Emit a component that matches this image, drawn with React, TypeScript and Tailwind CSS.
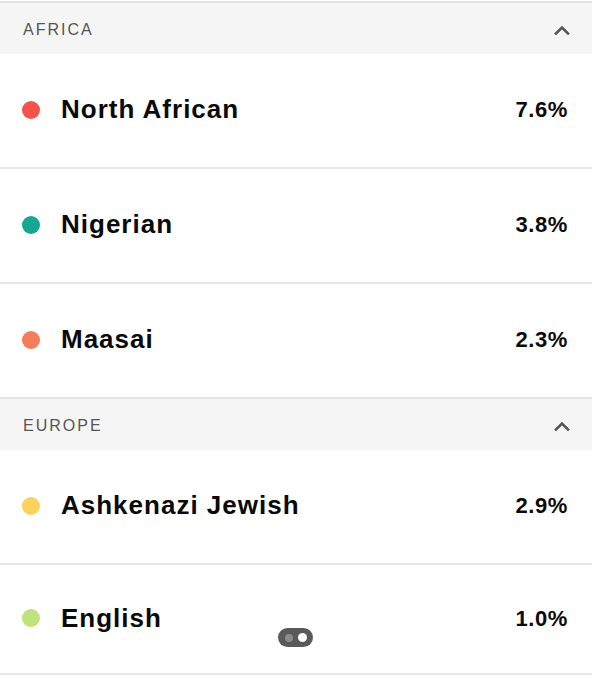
import React from "react";

type Item = { name: string; pct: string; color: string };
type Region = { title: string; items: Item[] };

const REGIONS: Region[] = [
  {
    title: "AFRICA",
    items: [
      { name: "North African", pct: "7.6%", color: "bg-[#f2544c]" },
      { name: "Nigerian", pct: "3.8%", color: "bg-[#17a594]" },
      { name: "Maasai", pct: "2.3%", color: "bg-[#f47d5b]" },
    ],
  },
  {
    title: "EUROPE",
    items: [
      { name: "Ashkenazi Jewish", pct: "2.9%", color: "bg-[#fdd25c]" },
      { name: "English", pct: "1.0%", color: "bg-[#c0e27a]" },
    ],
  },
];

function Chevron() {
  return (
    <svg width="16" height="10" viewBox="0 0 16 10" aria-hidden="true">
      <path d="M2 8.5 L8 2.5 L14 8.5" fill="none" stroke="#555" strokeWidth="2.6" strokeLinecap="square" />
    </svg>
  );
}

export default function App() {
  return (
    <div
      className="relative w-[592px] h-[678px] overflow-hidden bg-white pt-px"
      style={{ fontFamily: '"Liberation Sans", Arial, Helvetica, sans-serif' }}
    >
      <div className="border-t-2 border-[#e2e2e2]">
        {REGIONS.map((region) => (
          <section key={region.title}>
            <div className="flex h-[51px] items-center justify-between bg-[#f5f5f5] pl-[23px] pr-[22px] pt-[3px]">
              <span className="text-[16px] tracking-[2px] text-[#555]">{region.title}</span>
              <Chevron />
            </div>
            {region.items.map((item, i) => (
              <div
                key={item.name}
                className={`flex items-center justify-between border-b-2 border-[#e6e6e6] pl-[22px] pr-[24px] pb-[2px] ${
                  region.title === "EUROPE" && i === region.items.length - 1 ? "h-[110px]" : "h-[115px]"
                }`}
              >
                <div className="flex items-center">
                  <span className={`h-[18px] w-[18px] rounded-full ${item.color}`} />
                  <span className="ml-[21px] text-[26px] font-bold tracking-[1px] text-[#0a0a0a]">
                    {item.name}
                  </span>
                </div>
                <span className="text-[22px] font-bold tracking-[0.6px] text-[#0a0a0a]">{item.pct}</span>
              </div>
            ))}
          </section>
        ))}
      </div>
      <div className="absolute left-[278px] top-[628px] flex h-[19px] w-[35px] items-center justify-center gap-[5px] rounded-full bg-[#5a5a5a]">
        <span className="h-[8px] w-[8px] rounded-full bg-[#8c8c8c]" />
        <span className="h-[9px] w-[9px] rounded-full bg-white" />
      </div>
    </div>
  );
}
